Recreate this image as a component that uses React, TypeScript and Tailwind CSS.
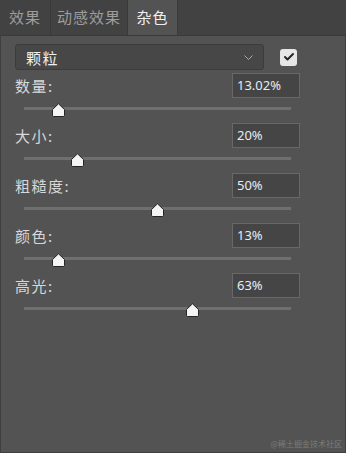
import { Check } from 'lucide-react'

const tabs = [
  { label: '效果', w: 'w-[51px]' },
  { label: '动感效果', w: 'w-[77px]' },
  { label: '杂色', w: 'w-[50px]', active: true },
]

const params = [
  { label: '数量:', value: '13.02%', pct: 13.02 },
  { label: '大小:', value: '20%', pct: 20 },
  { label: '粗糙度:', value: '50%', pct: 50 },
  { label: '颜色:', value: '13%', pct: 13 },
  { label: '高光:', value: '63%', pct: 63 },
]

const cjk = { fontFamily: '"Noto Sans CJK SC", "Noto Sans", sans-serif' }

function Thumb({ pct }: { pct: number }) {
  return (
    <svg
      width="15"
      height="15"
      viewBox="0 0 15 15"
      className="absolute top-[-4px]"
      style={{ left: `calc(${pct}% - 7.5px)` }}
    >
      <path
        d="M1.5 6.5 L7.5 0.8 L13.5 6.5 V12.3 Q13.5 13.5 12.3 13.5 H2.7 Q1.5 13.5 1.5 12.3 Z"
        fill="#f4f4f4"
        stroke="#242424"
        strokeWidth="1"
        strokeLinejoin="round"
      />
    </svg>
  )
}

function ParamRow({ label, value, pct }: { label: string; value: string; pct: number }) {
  return (
    <div className="h-[50px] flex flex-col">
      <div className="h-[25px] flex items-center justify-between pl-[14px] pr-[45px]">
        <span className="text-[15px] tracking-[1.5px] text-[#d8d8d8] leading-none" style={cjk}>
          {label}
        </span>
        <div
          className="w-[68px] h-[25px] bg-[#454545] border border-[#686868] flex items-center pl-[4px] text-[13px] text-[#e6ecf2]"
          style={{ fontFamily: '"Noto Sans", sans-serif' }}
        >
          {value}
        </div>
      </div>
      <div className="relative mt-[9px] ml-[23px] w-[267px] h-[3px] bg-[#6f6f6f]">
        <Thumb pct={pct} />
      </div>
    </div>
  )
}

export default function App() {
  return (
    <div className="w-[346px] h-[453px] bg-[#535353] flex flex-col overflow-hidden" style={cjk}>
      {/* tab bar */}
      <div className="h-[36px] bg-[#424242] flex items-end border-b border-[#3a3a3a] shrink-0">
        {tabs.map((t) =>
          t.active ? (
            <div
              key={t.label}
              className={`${t.w} h-[35px] bg-[#535353] flex items-center justify-center text-[15px] tracking-[1px] text-[#efefef] border-r border-[#3a3a3a]`}
            >
              {t.label}
            </div>
          ) : (
            <div
              key={t.label}
              className={`${t.w} h-[36px] flex items-center justify-center text-[15px] tracking-[1px] text-[#9d9d9d] border-r border-[#383838]`}
            >
              {t.label}
            </div>
          )
        )}
      </div>

      {/* panel */}
      <div className="flex-1 flex flex-col border-l border-r border-b border-[#3f3f3f] relative">
        <div className="mt-[8px] flex items-center pl-[14px]">
          <div className="w-[249px] h-[26px] rounded-[3px] bg-[#474747] border border-[#3c3c3c] flex items-center justify-between pl-[10px] pr-[10px]">
            <span className="text-[15px] tracking-[1.5px] text-[#f0f0f0] leading-none">颗粒</span>
            <svg width="9" height="5" viewBox="0 0 9 5">
              <path d="M0.5 0.5 L4.5 4.5 L8.5 0.5" fill="none" stroke="#a8a8a8" strokeWidth="1" />
            </svg>
          </div>
          <div className="ml-[16px] w-[17px] h-[17px] rounded-[3px] bg-[#e6e6e6] flex items-center justify-center">
            <Check size={12} strokeWidth={4} color="#262626" />
          </div>
        </div>

        <div className="mt-[3px] flex flex-col">
          {params.map((p) => (
            <ParamRow key={p.label} {...p} />
          ))}
        </div>

        <span className="absolute right-[3px] bottom-[4px] text-[8px] text-[#7c7c7c] leading-none">
          @稀土掘金技术社区
        </span>
      </div>
    </div>
  )
}
